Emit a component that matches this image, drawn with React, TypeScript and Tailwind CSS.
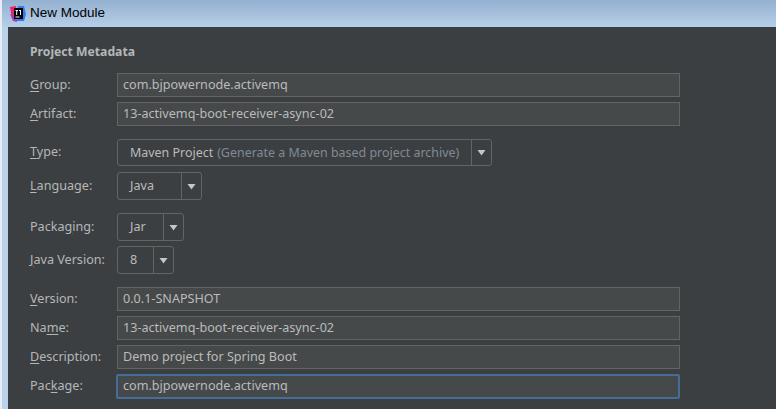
const FONT = "font-['Noto_Sans','Liberation_Sans',sans-serif]";

function Label({ before, mnemonic, after }: { before?: string; mnemonic: string; after: string }) {
  return (
    <span className="w-[87px] shrink-0 text-[12.6px] text-[#b4b7b9]">
      {before}
      <span className="underline underline-offset-2">{mnemonic}</span>
      {after}
    </span>
  );
}

function TextRow({ label, value, focused }: { label: [string, string, string]; value: string; focused?: boolean }) {
  return (
    <div className="flex h-6 items-center">
      <Label before={label[0]} mnemonic={label[1]} after={label[2]} />
      <div
        className={
          focused
            ? '-ml-px flex h-[25px] w-[564px] items-center rounded-[2px] border-2 border-[#466d99] bg-[#45494a] px-[5px] text-[12.6px] text-[#bbbbbb]'
            : 'flex h-6 w-[563px] items-center border border-[#646464] bg-[#45494a] px-[5px] text-[12.6px] text-[#bbbbbb]'
        }
      >
        {value}
      </div>
    </div>
  );
}

function SelectRow({
  label,
  width,
  children,
  height,
  textClass = 'text-[12.6px]',
}: {
  label: [string, string, string];
  width: string;
  children: React.ReactNode;
  height: string;
  textClass?: string;
}) {
  return (
    <div className="flex items-center">
      <Label before={label[0]} mnemonic={label[1]} after={label[2]} />
      <div className={`flex ${height} ${width} items-stretch rounded-[3px] border border-[#646464] bg-[#3c3f41]`}>
        <div className={`flex min-w-0 flex-1 items-center whitespace-nowrap pl-3 text-[#bbbbbb] ${textClass}`}>{children}</div>
        <div className="flex w-[20px] shrink-0 items-center justify-center border-l border-[#646464]">
          <svg width="9" height="7" viewBox="0 0 9 7">
            <path d="M0.5 1h8L4.5 6.5z" fill="#c4c6c8" />
          </svg>
        </div>
      </div>
    </div>
  );
}

export default function App() {
  return (
    <div className={`${FONT} flex h-[409px] w-[776px] flex-col overflow-hidden border-l-2 border-[#e6edf5] bg-[#b9d1ea]`}>
      {/* Window title bar */}
      <div className="flex h-[27px] shrink-0 items-center bg-gradient-to-b from-[#94b1d1] to-[#b7cfe8] pl-[8px]">
        <svg width="16" height="16" viewBox="0 0 16 16" className="mr-1 shrink-0">
          <path d="M0 1 6 0 6 10 2 13z" fill="#f0246e" />
          <path d="M8 0 14 0 16 8 14 15 6 15z" fill="#2d7ff0" />
          <path d="M0 8 3 15 7 16 6 10z" fill="#a03cc8" />
          <rect x="4" y="2" width="9" height="11" fill="#000" />
          <rect x="5.5" y="10.5" width="4" height="1" fill="#fff" />
          <rect x="5.5" y="4" width="2.5" height="1" fill="#fff" />
          <rect x="6.2" y="4" width="1" height="5" fill="#fff" />
          <rect x="9" y="4" width="2" height="1" fill="#fff" />
          <rect x="10" y="4" width="1" height="5" fill="#fff" />
        </svg>
        <span className="font-['Liberation_Sans',sans-serif] text-[13.5px] text-[#000000]">New Module</span>
      </div>

      {/* Dialog body */}
      <div className="ml-[6px] flex-1 bg-[#3c3f41] pl-[22px] pt-[16px]">
        <div className="mb-[12px] h-[18px] text-[12.2px] leading-[18px] font-bold text-[#b4b7b9]">Project Metadata</div>

        <div className="flex flex-col gap-[5px]">
          <TextRow label={['', 'G', 'roup:']} value="com.bjpowernode.activemq" />
          <TextRow label={['', 'A', 'rtifact:']} value="13-activemq-boot-receiver-async-02" />
        </div>

        <div className="mt-[13px] flex flex-col gap-[6px]">
          <SelectRow label={['', 'T', 'ype:']} width="w-[375px]" height="h-[27px]" textClass="pt-px text-[12.45px]">
            Maven Project<span className="ml-1 text-[#7f8b96]">(Generate a Maven based project archive)</span>
          </SelectRow>
          <SelectRow label={['', 'L', 'anguage:']} width="w-[85px]" height="h-[28px]">
            Java
          </SelectRow>
        </div>

        <div className="mt-[13px] flex flex-col gap-[5px]">
          <SelectRow label={['Packa', 'g', 'ing:']} width="w-[67px]" height="h-[28px]">
            Jar
          </SelectRow>
          <SelectRow label={['', 'J', 'ava Version:']} width="w-[57px]" height="h-[28px]">
            8
          </SelectRow>
        </div>

        <div className="mt-[13px] flex flex-col gap-[5px]">
          <TextRow label={['', 'V', 'ersion:']} value="0.0.1-SNAPSHOT" />
          <TextRow label={['Na', 'm', 'e:']} value="13-activemq-boot-receiver-async-02" />
          <TextRow label={['', 'D', 'escription:']} value="Demo project for Spring Boot" />
          <TextRow label={['Pac', 'k', 'age:']} value="com.bjpowernode.activemq" focused />
        </div>
      </div>
    </div>
  );
}
